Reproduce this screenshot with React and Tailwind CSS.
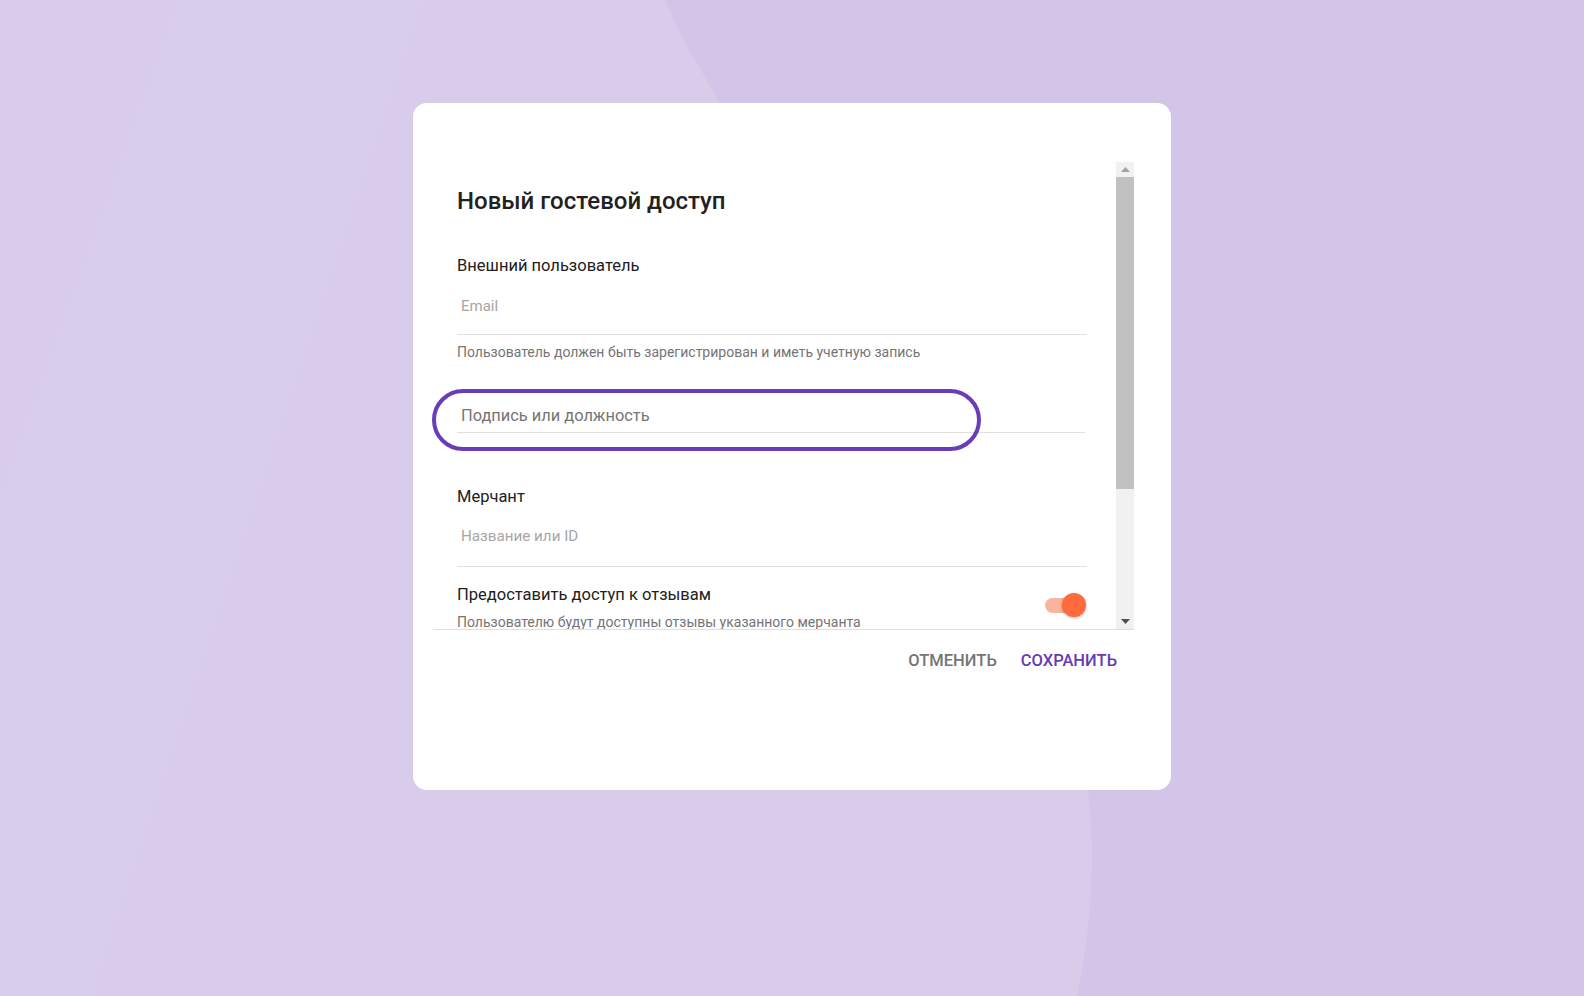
import { useState } from 'react';

function Field({ placeholder, className, textClass }) {
  return (
    <div className={`border-b border-[#e0e0e0] pl-[4px] ${className}`}>
      <span className={`block leading-[24px] ${textClass}`}>{placeholder}</span>
    </div>
  );
}

function Toggle({ on }) {
  return (
    <div className="relative w-[42px] h-[24px] flex items-center">
      <div className={`w-[36px] h-[15px] rounded-full ${on ? 'bg-[#fbb49c]' : 'bg-[#bdbdbd]'}`} />
      <div
        className={`absolute top-0 w-[24px] h-[24px] rounded-full shadow-[0_1px_3px_rgba(0,0,0,0.3)] ${
          on ? 'right-[1px] bg-[#ff6b3d]' : 'left-0 bg-[#fafafa]'
        }`}
      />
    </div>
  );
}

function Scrollbar() {
  return (
    <div className="w-[18px] flex flex-col bg-[#f1f1f1]">
      <div className="h-[15px] flex items-center justify-center">
        <svg width="9" height="5" viewBox="0 0 9 5">
          <path d="M0 5 L4.5 0 L9 5 Z" fill="#a3a3a3" />
        </svg>
      </div>
      <div className="h-[312px] bg-[#c1c1c1]" />
      <div className="flex-1" />
      <div className="h-[15px] flex items-center justify-center">
        <svg width="9" height="5" viewBox="0 0 9 5">
          <path d="M0 0 L9 0 L4.5 5 Z" fill="#505050" />
        </svg>
      </div>
    </div>
  );
}

export default function App() {
  const [reviews] = useState(true);

  return (
    <div className="relative min-h-[996px] w-full overflow-hidden bg-[#d3c5e8] font-['Roboto','Liberation_Sans',sans-serif]">
      {/* background sheen */}
      <svg className="absolute inset-0 pointer-events-none" width="1584" height="996" viewBox="0 0 1584 996">
        <path d="M0 0 L665 0 C 800 300, 1170 560, 1077 996 L0 996 Z" fill="#ffffff" fillOpacity="0.12" />
        <path d="M180 0 L420 0 L90 996 L0 996 L0 500 Z" fill="#ffffff" fillOpacity="0.02" />
      </svg>

      <div className="relative mx-auto mt-[103px] w-[758px] h-[687px] rounded-[14px] bg-white pt-[59px] pl-[20px] pr-[37px]">
        {/* scroll region */}
        <div className="flex h-[468px] border-b border-[#e0e0e0]">
          <div className="flex-1 overflow-hidden pl-[24px] pr-[29px] pt-[25px]">
            <h2 className="text-[24px] leading-[28px] font-medium text-[#212121]">Новый гостевой доступ</h2>

            <div className="mt-[39px] text-[16.5px] leading-[24px] text-[#212121]">Внешний пользователь</div>
            <Field
              placeholder="Email"
              className="mt-[16px] pb-[16px]"
              textClass="text-[15px] text-[#a6a6a6]"
            />
            <div className="mt-[9px] text-[14px] leading-[16px] text-[#757575]">
              Пользователь должен быть зарегистрирован и иметь учетную запись
            </div>

            <Field
              placeholder="Подпись или должность"
              className="mt-[44px] pb-[4px] mr-[2px]"
              textClass="text-[16.4px] text-[#757575]"
            />

            <div className="mt-[52px] text-[16.5px] leading-[24px] text-[#212121]">Мерчант</div>
            <Field
              placeholder="Название или ID"
              className="mt-[15px] pb-[18px]"
              textClass="text-[15.2px] text-[#a6a6a6]"
            />

            <div className="mt-[16px] flex items-start justify-between">
              <div>
                <div className="text-[16.5px] leading-[24px] text-[#212121]">Предоставить доступ к отзывам</div>
                <div className="mt-[7px] text-[14px] leading-[16px] text-[#757575]">
                  Пользователю будут доступны отзывы указанного мерчанта
                </div>
              </div>
              <div className="mt-[10px]">
                <Toggle on={reviews} />
              </div>
            </div>
          </div>
          <Scrollbar />
        </div>

        {/* actions */}
        <div className="mt-[13px] flex justify-end gap-2 pr-[9px]">
          <button className="h-[36px] px-2 text-[16.5px] font-medium uppercase text-[#757575]">Отменить</button>
          <button className="h-[36px] px-2 text-[16.5px] font-medium uppercase text-[#673ab7]">Сохранить</button>
        </div>

        {/* highlight annotation */}
        <div className="absolute left-[19px] top-[286px] w-[549px] h-[62px] rounded-full border-[4px] border-[#6a3db8] pointer-events-none" />
      </div>
    </div>
  );
}
